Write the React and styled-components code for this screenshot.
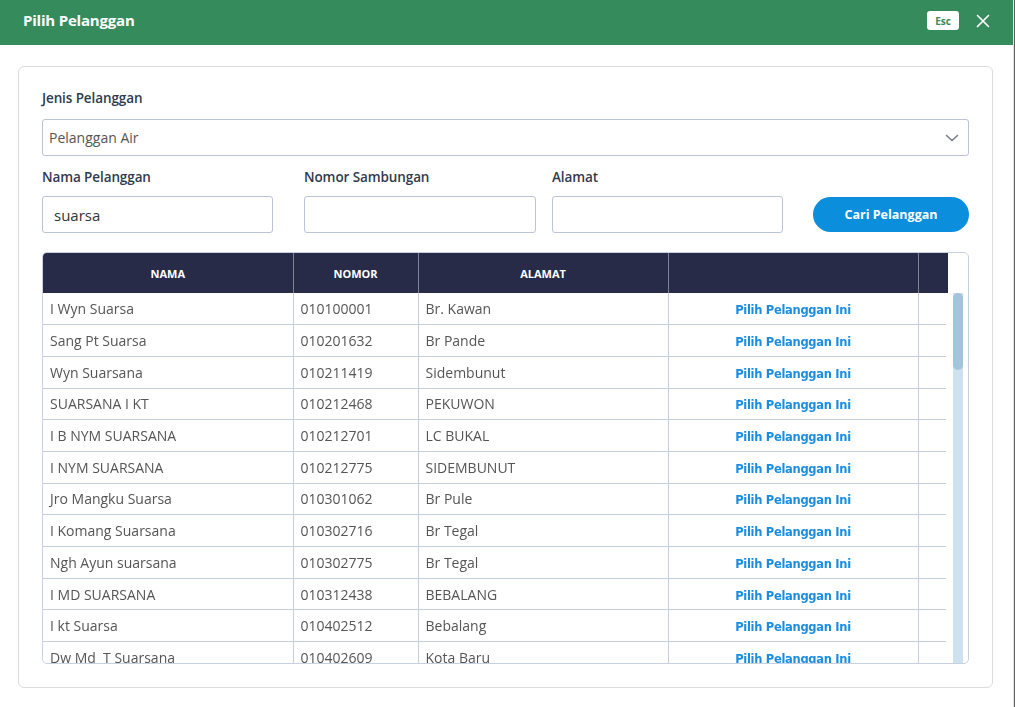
import React from "react";
import styled, { createGlobalStyle } from "styled-components";

const GlobalStyle = createGlobalStyle`
  html, body {
    margin: 0;
    padding: 0;
    background: #5c5c5c;
    font-family: "Open Sans", "Noto Sans", sans-serif;
  }
  * {
    box-sizing: border-box;
  }
`;

const Modal = styled.div`
  width: 1014px;
  height: 707px;
  background: #fff;
  border-right: 1px solid #e4e4e4;
  display: flex;
  flex-direction: column;
`;

const TitleBar = styled.div`
  flex-shrink: 0;
  height: 45px;
  background: #358b5b;
  display: flex;
  align-items: center;
  padding: 0 23px;
`;

const Title = styled.h1`
  margin: 0;
  flex: 1;
  color: #fff;
  font-size: 15px;
  font-weight: 700;
  letter-spacing: -0.2px;
  margin-top: -5px;
`;

const EscBadge = styled.span`
  background: #fff;
  color: #358b5b;
  font-size: 10px;
  font-weight: 700;
  border-radius: 3px;
  width: 32px;
  height: 19px;
  display: inline-flex;
  align-items: center;
  justify-content: center;
  margin-right: 16px;
  margin-top: -4px;
`;

const CloseButton = styled.button`
  border: 0;
  background: none;
  padding: 0;
  width: 16px;
  height: 16px;
  display: flex;
  align-items: center;
  justify-content: center;
  cursor: pointer;
  margin-right: -1px;
  margin-top: -4px;
`;

const Body = styled.div`
  flex: 1;
  min-height: 0;
  padding: 21px 20px 19px 18px;
  display: flex;
`;

const Card = styled.div`
  flex: 1;
  min-width: 0;
  border: 1px solid #dcdcdc;
  border-radius: 6px;
  padding: 21px 23px 23px 23px;
  display: flex;
  flex-direction: column;
`;

const Label = styled.label`
  display: block;
  color: #2f3a4e;
  font-size: 13.5px;
  font-weight: 600;
  letter-spacing: -0.1px;
  line-height: 20px;
  margin-bottom: ${(p) => p.$gap ?? 11}px;
`;

const SelectBox = styled.div`
  flex-shrink: 0;
  height: 37px;
  border: 1px solid #b9c4d6;
  border-radius: 3px;
  display: flex;
  align-items: center;
  justify-content: space-between;
  padding: 0 8px 0 6px;
  color: #555;
  font-size: 14px;
  margin-bottom: 11px;
`;

const FilterRow = styled.div`
  flex-shrink: 0;
  display: flex;
  align-items: flex-end;
  margin-bottom: 19px;
`;

const Field = styled.div`
  width: ${(p) => p.$w}px;
  margin-left: ${(p) => p.$ml || 0}px;
  display: flex;
  flex-direction: column;
`;

const TextInput = styled.input`
  height: 37px;
  border: 1px solid #b9c4d6;
  border-radius: 3px;
  padding: 0 11px;
  font-family: "Open Sans", "Noto Sans", sans-serif;
  font-size: 15px;
  color: #333;
  outline: none;
  width: 100%;
`;

const SearchButton = styled.button`
  flex: 1;
  margin-left: 30px;
  height: 35px;
  margin-bottom: 1px;
  border: 0;
  border-radius: 18px;
  background: #0b8edb;
  color: #fff;
  font-family: "Open Sans", "Noto Sans", sans-serif;
  font-size: 12.5px;
  font-weight: 700;
  cursor: pointer;
`;

const TableFrame = styled.div`
  flex: 1;
  min-height: 0;
  border: 1px solid #c6d1e1;
  border-radius: 5px;
  overflow: hidden;
  display: flex;
  flex-direction: column;
`;

const Grid = styled.table`
  width: 905px;
  border-collapse: collapse;
  table-layout: fixed;
`;

const HeadCell = styled.th`
  background: #272b47;
  color: #fff;
  height: 40px;
  font-size: 11px;
  font-weight: 700;
  text-align: center;
  border-right: 1px solid #80828f;
  padding: 0;
  &:last-child {
    border-right: 0;
  }
`;

const BodyArea = styled.div`
  flex: 1;
  min-height: 0;
  display: flex;
`;

const RowsClip = styled.div`
  width: 905px;
  overflow: hidden;
`;

const Cell = styled.td`
  height: 31.7px;
  padding: 0 7px;
  font-size: 14px;
  color: #555;
  border-right: 1px solid #c3cee0;
  border-bottom: 1px solid #c3cee0;
  white-space: pre;
  overflow: hidden;
  text-align: ${(p) => (p.$center ? "center" : "left")};
  &:last-child {
    border-right: 0;
  }
`;

const PickLink = styled.a`
  color: #1a8de0;
  font-family: "DejaVu Sans", Verdana, sans-serif;
  font-size: 11.5px;
  font-weight: 700;
  letter-spacing: -0.3px;
  text-decoration: none;
  cursor: pointer;
`;

const Track = styled.div`
  width: 22px;
  padding: 0 5px 0 7px;
  display: flex;
`;

const TrackBand = styled.div`
  flex: 1;
  background: #cde1ee;
`;

const Thumb = styled.div`
  height: 77px;
  background: #a3c4da;
  border-radius: 5px;
`;

const rows = [
  ["I Wyn Suarsa", "010100001", "Br. Kawan"],
  ["Sang Pt Suarsa", "010201632", "Br Pande"],
  ["Wyn Suarsana", "010211419", "Sidembunut"],
  ["SUARSANA I KT", "010212468", "PEKUWON"],
  ["I B NYM SUARSANA", "010212701", "LC BUKAL"],
  ["I NYM SUARSANA", "010212775", "SIDEMBUNUT"],
  ["Jro Mangku Suarsa", "010301062", "Br Pule"],
  ["I Komang Suarsana", "010302716", "Br Tegal"],
  ["Ngh Ayun suarsana", "010302775", "Br Tegal"],
  ["I MD SUARSANA", "010312438", "BEBALANG"],
  ["I kt Suarsa", "010402512", "Bebalang"],
  ["Dw Md  T Suarsana", "010402609", "Kota Baru"],
];

const Cols = () => (
  <colgroup>
    <col style={{ width: 250 }} />
    <col style={{ width: 125 }} />
    <col style={{ width: 250 }} />
    <col style={{ width: 250 }} />
    <col style={{ width: 30 }} />
  </colgroup>
);

const Chevron = () => (
  <svg width="16" height="16" viewBox="0 0 16 16" fill="none">
    <path d="M2.5 5.5 L8 10.5 L13.5 5.5" stroke="#7a7f88" strokeWidth="1.6" strokeLinecap="round" strokeLinejoin="round" />
  </svg>
);

const CloseIcon = () => (
  <svg width="14" height="14" viewBox="0 0 14 14">
    <path d="M1.5 1.5 L12.5 12.5 M12.5 1.5 L1.5 12.5" stroke="#fff" strokeWidth="1.7" strokeLinecap="round" />
  </svg>
);

export default function App() {
  return (
    <Modal>
      <GlobalStyle />
      <TitleBar>
        <Title>Pilih Pelanggan</Title>
        <EscBadge>Esc</EscBadge>
        <CloseButton aria-label="Tutup">
          <CloseIcon />
        </CloseButton>
      </TitleBar>
      <Body>
        <Card>
          <Label>Jenis Pelanggan</Label>
          <SelectBox>
            <span>Pelanggan Air</span>
            <Chevron />
          </SelectBox>
          <FilterRow>
            <Field $w={231}>
              <Label $gap={9}>Nama Pelanggan</Label>
              <TextInput defaultValue="suarsa" autoFocus />
            </Field>
            <Field $w={232} $ml={31}>
              <Label $gap={9}>Nomor Sambungan</Label>
              <TextInput />
            </Field>
            <Field $w={231} $ml={16}>
              <Label $gap={9}>Alamat</Label>
              <TextInput />
            </Field>
            <SearchButton>Cari Pelanggan</SearchButton>
          </FilterRow>
          <TableFrame>
            <Grid>
              <Cols />
              <thead>
                <tr>
                  <HeadCell>NAMA</HeadCell>
                  <HeadCell>NOMOR</HeadCell>
                  <HeadCell>ALAMAT</HeadCell>
                  <HeadCell />
                  <HeadCell />
                </tr>
              </thead>
            </Grid>
            <BodyArea>
              <RowsClip>
                <Grid>
                  <Cols />
                  <tbody>
                    {rows.map(([nama, nomor, alamat]) => (
                      <tr key={nomor}>
                        <Cell>{nama}</Cell>
                        <Cell>{nomor}</Cell>
                        <Cell>{alamat}</Cell>
                        <Cell $center>
                          <PickLink>Pilih Pelanggan Ini</PickLink>
                        </Cell>
                        <Cell />
                      </tr>
                    ))}
                  </tbody>
                </Grid>
              </RowsClip>
              <Track>
                <TrackBand>
                  <Thumb />
                </TrackBand>
              </Track>
            </BodyArea>
          </TableFrame>
        </Card>
      </Body>
    </Modal>
  );
}
